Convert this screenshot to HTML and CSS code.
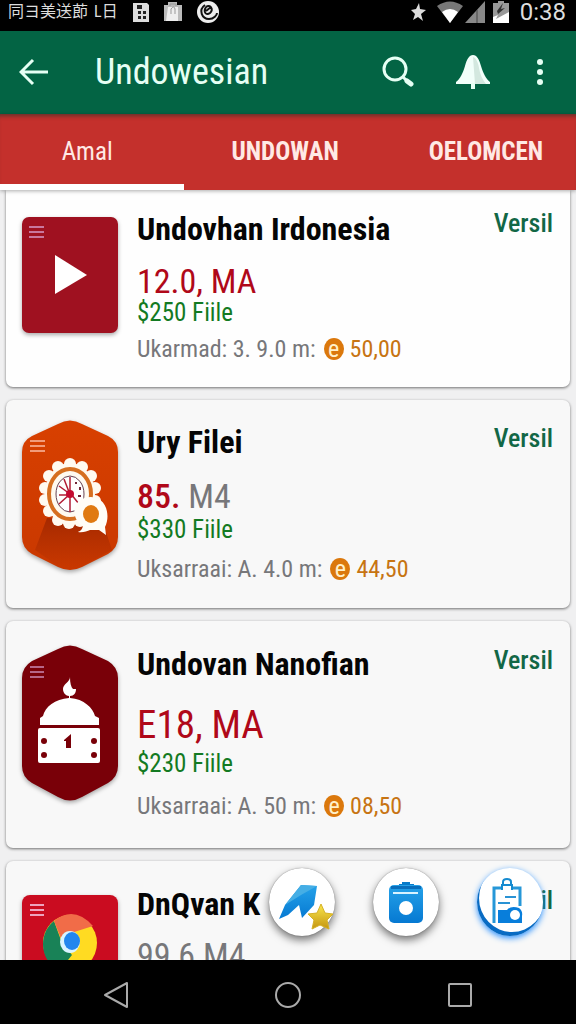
FILE: index.html
```html
<!DOCTYPE html>
<html lang="id">
<head>
<meta charset="utf-8">
<meta name="viewport" content="width=device-width, initial-scale=1">
<title>Undowesian</title>
<link rel="stylesheet" href="styles.css">
</head>
<body>
<div class="status">
  <span class="status-text">同ヨ美送莭</span>
  <span class="status-text status-latin">L日</span>
  <svg class="status-icon" width="16" height="20" viewBox="0 0 16 20"><path d="M0 1h14l2 2v17H0z" fill="#ddd"/><path d="M4 3h5v4H4zM5 9h3v3H5zM5 14h3v3H5zM10 9h3v3h-3zM10 14h3v3h-3z" fill="#222"/></svg>
  <svg class="status-icon" width="18" height="20" viewBox="0 0 18 20"><path d="M0 3h4V0h9v3h5v16H0z" fill="#bbb"/><path d="M4 5h10v14H2z" fill="#eee"/><path d="M7 12V7q3-4 4 0v5M6 4V2h6v2" fill="none" stroke="#999"/></svg>
  <svg class="status-icon status-round" width="22" height="22" viewBox="0 0 22 22"><circle cx="11" cy="11" r="11" fill="#eee"/><path d="M8 4c-7 5-3 14 4 14 5 0 8-4 8-6M9 6c-3 5 0 9 4 6 4-4 0-9-4-6M9 10l5-4" fill="none" stroke="#111" stroke-width="2"/></svg>
  <span class="spacer"></span>
  <svg class="status-star" width="16" height="20" viewBox="0 0 16 20"><path d="M8 1l1 6 6 1-5 4 2 7-5-4-5 3 2-6-4-4 5-1z" fill="#ddd"/></svg>
  <svg width="26" height="22" viewBox="0 0 26 22"><path d="M0 5Q13-4 26 5L13 22z" fill="#777"/><path d="M5 11q8-6 16 0l-8 11z" fill="#fff"/></svg>
  <svg class="status-signal" width="20" height="22" viewBox="0 0 20 22"><path d="M20 0v22H0z" fill="#888"/><path d="M12 9v13" stroke="#444"/></svg>
  <svg class="status-battery" width="16" height="22" viewBox="0 0 16 22"><path d="M0 2h5V0h6v2h5v20H0z" fill="#999"/><path d="M0 22V16l5-2-2 4 13-7v11z" fill="#fff"/><path d="M4 10l6-8-2 6 4-1-7 6z" fill="#333"/></svg>
  <time class="clock">0:38</time>
</div>

<header class="appbar">
  <button class="icon-button" aria-label="Back"><svg width="30" height="28" viewBox="0 0 30 28"><path d="M29 14H2M14 2L2 14l12 12" fill="none" stroke="#e6fff4" stroke-width="3"/></svg></button>
  <h1 class="appbar-title">Undowesian</h1>
  <button class="icon-button" aria-label="Search"><svg width="32" height="32" viewBox="0 0 32 32"><circle cx="13" cy="13" r="11" fill="none" stroke="#e6fff4" stroke-width="3"/><path d="M21 21l4 4" stroke="#e6fff4" stroke-width="3"/><path d="M25 25l4 3" stroke="#e6fff4" stroke-width="5" stroke-linecap="round"/></svg></button>
  <button class="icon-button" aria-label="Notifications"><svg width="36" height="36" viewBox="0 0 36 36"><path d="M18 1c-4 0-6 4-8 11C8 19 5 25 1 28v2h34v-2c-4-3-7-9-9-16-2-7-4-11-8-11z" fill="#f2fffa"/><path d="M18 3l2 27h11c-4-5-6-10-7-16-1-6-3-10-6-11z" fill="#d3e8df"/><path d="M18 29v6" stroke="#e6fff4" stroke-width="4"/></svg></button>
  <button class="icon-button icon-button-narrow" aria-label="More options"><svg width="8" height="30" viewBox="0 0 8 30"><g fill="#e6fff4"><circle cx="4" cy="5" r="3"/><circle cx="4" cy="15" r="3"/><circle cx="4" cy="25" r="3"/></g></svg></button>
</header>

<nav class="tabs">
  <a class="tab tab-active" href="#amal">Amal</a>
  <a class="tab" href="#undowan">UNDOWAN</a>
  <a class="tab tab-last" href="#oelomcen">OELOMCEN</a>
</nav>

<div class="content">
  <main class="list">
    <article class="card card-first">
      <svg class="thumb" width="96" height="116" viewBox="0 0 96 116"><rect width="96" height="116" rx="7" fill="#9f1120"/><path d="M7 10h15M7 15h15M7 20h15" stroke="#c9779d" stroke-width="2"/><path d="M33 38v39l32-19z" fill="#fff"/></svg>
      <div class="info">
        <h2 class="name">Undovhan Irdonesia</h2>
        <p class="price">12.0, MA</p>
        <p class="file">$250 Fiile</p>
        <p class="meta"><span>Ukarmad: 3. 9.0 m:</span><span class="coin">e</span><span class="amount">50,00</span></p>
      </div>
      <a class="version" href="#v1">Versil</a>
    </article>

    <article class="card card-second">
      <svg class="thumb" width="96" height="150" viewBox="0 0 96 150">
        <defs>
          <linearGradient id="orange" x1="0" y1="0" x2="0" y2="1"><stop offset="0" stop-color="#d84000"/><stop offset="1" stop-color="#c93800"/></linearGradient>
          <linearGradient id="shade" x1="0" y1="0" x2="0" y2="1"><stop offset="0" stop-color="#a52900"/><stop offset="1" stop-color="#a52900" stop-opacity="0"/></linearGradient>
        </defs>
        <path d="M36 4Q48-3 60 4L86 16Q96 21 96 32V117Q96 128 86 134L60 147Q48 153 36 147L10 134Q0 128 0 117V32Q0 21 10 16Z" fill="url(#orange)"/>
        <path d="M25 98L13 130 36 146Q48 153 60 146L90 130 84 112 60 100z" fill="url(#shade)"/>
        <path d="M8 21h15M8 26h15M8 31h15" stroke="#f19b7a" stroke-width="2"/>
        <g fill="#fffaf0"><ellipse cx="48" cy="74" rx="25" ry="31"/><circle cx="48" cy="44" r="6"/><circle cx="60" cy="47" r="6"/><circle cx="69" cy="56" r="6"/><circle cx="73" cy="68" r="6"/><circle cx="73" cy="81" r="6"/><circle cx="58" cy="101" r="6"/><circle cx="47" cy="103" r="6"/><circle cx="36" cy="100" r="6"/><circle cx="27" cy="91" r="6"/><circle cx="23" cy="80" r="6"/><circle cx="23" cy="68" r="6"/><circle cx="27" cy="56" r="6"/><circle cx="36" cy="47" r="6"/></g>
        <ellipse cx="48" cy="74" rx="21" ry="25" fill="none" stroke="#d66f20" stroke-width="4"/>
        <ellipse cx="48" cy="74" rx="14" ry="18" fill="#fff" stroke="#654353"/>
        <path d="M48 57v35M37 66l11 8-11 10M37 75h12M49 74l8 10M42 59l5 13" stroke="#b11c35" stroke-width="1.5" fill="none"/><circle cx="48" cy="74" r="4" fill="#c40930"/><path d="M54 62v2M58 67v3M56 76h3" stroke="#702535" stroke-width="2"/>
        <path d="M69 77c-20 0-21 22-8 29-1 4-3 5-5 6 5 1 9-1 12-2l9 0 7 5-1-8c6-12 1-30-14-30z" fill="#fffdf7"/><ellipse cx="69" cy="94" rx="8" ry="9" fill="#e07a12"/>
      </svg>
      <div class="info">
        <h2 class="name">Ury Filei</h2>
        <p class="price"><b class="price-strong">85.</b> <span class="muted">M4</span></p>
        <p class="file">$330 Fiile</p>
        <p class="meta"><span>Uksarraai: A. 4.0 m:</span><span class="coin">e</span><span class="amount">44,50</span></p>
      </div>
      <a class="version" href="#v2">Versil</a>
    </article>

    <article class="card card-third">
      <svg class="thumb" width="96" height="156" viewBox="0 0 96 156">
        <path d="M36 4Q48-3 60 4L86 16Q96 22 96 33V121Q96 132 86 138L60 152Q48 159 36 152L10 138Q0 132 0 121V33Q0 22 10 16Z" fill="#790008"/>
        <path d="M8 22h14M8 27h14M8 32h14" stroke="#b66788" stroke-width="2"/>
        <path d="M48 32c0 5-7 7-7 12 0 4 3 7 6 7v2c-14 1-24 9-26 18l-3 2v7h59v-7l-4-2c-2-8-11-17-25-18v-2c4 0 6-3 6-7h-3c-2-2-3-6-3-12z" fill="#fff"/>
        <rect x="16" y="83" width="62" height="35" rx="2" fill="#fff"/><g fill="#790008"><circle cx="22" cy="96" r="3"/><circle cx="22" cy="110" r="3"/><circle cx="72" cy="96" r="3"/><circle cx="72" cy="110" r="3"/><path d="M42 95l7-6v14h-5v-7h-2z"/></g>
      </svg>
      <div class="info">
        <h2 class="name">Undovan Nanofian</h2>
        <p class="price price-large">E18, MA</p>
        <p class="file">$230 Fiile</p>
        <p class="meta"><span>Uksarraai: A. 50 m:</span><span class="coin">e</span><span class="amount">08,50</span></p>
      </div>
      <a class="version" href="#v3">Versil</a>
    </article>

    <article class="card card-fourth">
      <svg class="thumb" width="96" height="116" viewBox="0 0 96 116"><rect width="96" height="116" rx="8" fill="#ca0c20"/><path d="M8 10h14M8 15h14M8 20h14" stroke="#eda3bd" stroke-width="2"/><ellipse cx="48" cy="48" rx="27" ry="28" fill="#ffdb22"/><path d="M32 26C16 38 17 67 38 75L50 60 40 48z" fill="#198257"/><path d="M32 26Q52 10 71 31L49 38 40 46z" fill="#f16c48"/><ellipse cx="48" cy="47" rx="10" ry="11" fill="#d9f4ff"/><ellipse cx="50" cy="46" rx="8" ry="9" fill="#2386ee"/></svg>
      <div class="info">
        <h2 class="name">DnQvan K</h2>
        <p class="price muted">99 6 M4</p>
      </div>
      <a class="version" href="#v4">Versil</a>
    </article>
  </main>

  <div class="actions">
    <button class="fab" aria-label="Send"><svg width="66" height="66" viewBox="0 0 66 66"><defs><linearGradient id="blue" x1="0" y1="0" x2="0" y2="1"><stop offset="0" stop-color="#25a2e9"/><stop offset="1" stop-color="#0679d2"/></linearGradient><linearGradient id="gold" x1="0" y1="0" x2="0" y2="1"><stop offset="0" stop-color="#fbe84b"/><stop offset="1" stop-color="#c49512"/></linearGradient></defs><path d="M10 50L16 36 32 16l16 1-3 19-12 13-3-13-11 10z" fill="url(#blue)"/><path d="M16 36l16-20 16 1-16 9z" fill="#45aee5"/><path d="M52 35l4 9 8 1-6 6 2 9-9-4-8 4 2-9-6-6 9-1z" fill="url(#gold)" stroke="#d5b126"/></svg></button>
    <button class="fab" aria-label="Camera"><svg width="66" height="66" viewBox="0 0 66 66"><path d="M26 15h3v-2h8v2h4v3H26z" fill="#087bc9"/><rect x="16" y="16" width="34" height="38" rx="5" fill="url(#blue)"/><path d="M18 17h30v3H18z" fill="#096ebb"/><path d="M20 24h25" stroke="#d8f3ff" stroke-width="2"/><circle cx="33" cy="39" r="7" fill="#fff"/></svg></button>
    <button class="fab fab-blue" aria-label="Documents"><svg width="66" height="66" viewBox="0 0 66 66"><path d="M17 54V19h26v18" fill="none" stroke="#2697d8" stroke-width="3"/><path d="M25 21v-5h10v5" fill="#fff" stroke="#168bd0" stroke-width="2"/><path d="M26 16v-3q0-3 4-3t4 3v3" fill="none" stroke="#168bd0" stroke-width="2"/><path d="M28 28h11M21 34h12" stroke="#2992d4" stroke-width="2"/><path d="M21 54V41h9q4-5 12-2 4 3 3 8v7z" fill="#087edb"/><circle cx="38" cy="46" r="5" fill="#fff"/></svg></button>
  </div>
</div>

<nav class="system-nav" aria-label="System">
  <button class="system-button" aria-label="Back"><svg width="28" height="30" viewBox="0 0 28 30"><path d="M25 3v24L3 15z" fill="none" stroke="#aaa" stroke-width="2" stroke-linejoin="round"/></svg></button>
  <button class="system-button" aria-label="Home"><svg width="28" height="28" viewBox="0 0 28 28"><circle cx="14" cy="14" r="12" fill="none" stroke="#aaa" stroke-width="2"/></svg></button>
  <button class="system-button" aria-label="Recent"><svg width="28" height="28" viewBox="0 0 28 28"><rect x="3" y="3" width="22" height="22" rx="1" fill="none" stroke="#aaa" stroke-width="2"/></svg></button>
</nav>
</body>
</html>
```
FILE: styles.css
```css
* { box-sizing: border-box; }

body {
  margin: 0;
  height: 100vh;
  display: flex;
  flex-direction: column;
  overflow: hidden;
  background: #f0f0f1;
  color: #050505;
  font-family: "Roboto Condensed", Roboto, "Noto Sans CJK SC", sans-serif;
}

h1, h2, p { margin: 0; }
a { text-decoration: none; }
button { border: 0; padding: 0; background: none; font: inherit; }
svg { display: block; flex: none; }

.status {
  display: flex;
  align-items: center;
  flex: none;
  height: 31px;
  padding: 0 10px 8px 8px;
  background: #000;
  color: #ddd;
}
.status-text { font-size: 16px; line-height: 22px; white-space: nowrap; }
.status-latin { margin-left: 6px; }
.status-icon { margin-left: 15px; }
.spacer { flex: 1; }
.status-star { margin-right: 10px; }
.status-signal { margin-left: 2px; }
.status-battery { margin: 0 11px 0 8px; }
.clock { font-family: Roboto, sans-serif; font-size: 24px; line-height: 24px; }

.appbar {
  display: flex;
  align-items: center;
  flex: none;
  height: 83px;
  padding: 0 20px 2px 10px;
  background: #036444;
}
.icon-button { display: grid; place-items: center; width: 48px; height: 56px; margin-right: 27px; }
.icon-button-narrow { width: 32px; margin: 0; }
.appbar-title {
  flex: 1;
  margin-left: 10px;
  font-size: 36px;
  line-height: 44px;
  font-weight: 400;
  color: #e6fff4;
}

.tabs {
  display: grid;
  grid-template-columns: 32fr 35fr 33fr;
  flex: none;
  height: 76px;
  background: #c4302c;
  box-shadow: inset 0 5px 4px -3px #62322b, 0 1px 4px #0005;
  z-index: 1;
}
.tab {
  display: grid;
  place-items: center;
  padding-top: 6px;
  border-bottom: 6px solid transparent;
  font-size: 25px;
  line-height: 30px;
  font-weight: 700;
  color: #ffe9e5;
}
.tab-active { border-color: #fff; padding-right: 10px; font-weight: 400; }
.tab-last { padding-left: 10px; }

.content { position: relative; flex: 1; min-height: 0; overflow: hidden; }
.list { display: flex; flex-direction: column; gap: 13px; padding: 0 6px; }

.card {
  --gap-price: 14px;
  --gap-file: 2px;
  --gap-meta: 11px;
  display: flex;
  align-items: flex-start;
  flex: none;
  padding: 22px 17px 23px 16px;
  border-radius: 7px;
  background: #f8f8f8;
  box-shadow: 0 1px 3px #0008;
}
.card-first { --gap-price: 12px; --gap-file: 0px; --gap-meta: 8px; padding-top: 19px; padding-bottom: 22px; border-radius: 0 0 7px 7px; background: #fefefe; }
.card-third { --gap-price: 17px; --gap-file: 3px; --gap-meta: 14px; padding: 23px 17px 26px 16px; }
.card-fourth { --gap-price: 11px; padding-top: 23px; }

.thumb { margin-right: 19px; filter: drop-shadow(0 2px 2px #0005); }
.card-first .thumb { margin-top: 8px; }
.card-second .thumb { margin: -2px 19px 0 0; }
.card-third .thumb { margin-top: 1px; }
.card-fourth .thumb { margin-top: 11px; }

.info { flex: 1; min-width: 0; white-space: nowrap; }
.name { font-size: 32px; line-height: 40px; font-weight: 700; }
.price { margin-top: var(--gap-price); font-size: 34px; line-height: 40px; color: #b00819; }
.price-large { font-size: 39px; line-height: 48px; }
.price-strong { font-weight: 500; }
.price.muted, .muted { color: #77777a; }
.file { margin-top: var(--gap-file); font-size: 25px; line-height: 24px; color: #137a22; }
.meta {
  display: flex;
  align-items: center;
  margin-top: var(--gap-meta);
  font-size: 24px;
  line-height: 32px;
  color: #77777a;
}
.coin {
  display: grid;
  place-items: center;
  width: 20px;
  height: 22px;
  margin: 0 6px 0 8px;
  border-radius: 50%;
  background: #db780c;
  color: #fff0c9;
  font-size: 24px;
  line-height: 20px;
  font-weight: 400;
}
.amount { color: #c77412; }
.version { font-size: 26px; line-height: 32px; font-weight: 500; color: #126746; }
.card-first .version { line-height: 28px; }

.actions {
  position: absolute;
  right: 33px;
  bottom: 24px;
  display: flex;
  gap: 38px;
}
.fab {
  width: 66px;
  height: 68px;
  border-radius: 50%;
  background: #fff;
  box-shadow: 0 4px 8px #0008, 0 0 1px #0008;
}
.fab-blue { box-shadow: inset 2px -4px 0 #086bc3, 0 2px 6px #268fff; }

.system-nav {
  display: flex;
  justify-content: center;
  align-items: center;
  gap: 124px;
  flex: none;
  height: 64px;
  padding-top: 6px;
  background: #000;
}
.system-button { display: grid; place-items: center; width: 48px; height: 48px; }
```
